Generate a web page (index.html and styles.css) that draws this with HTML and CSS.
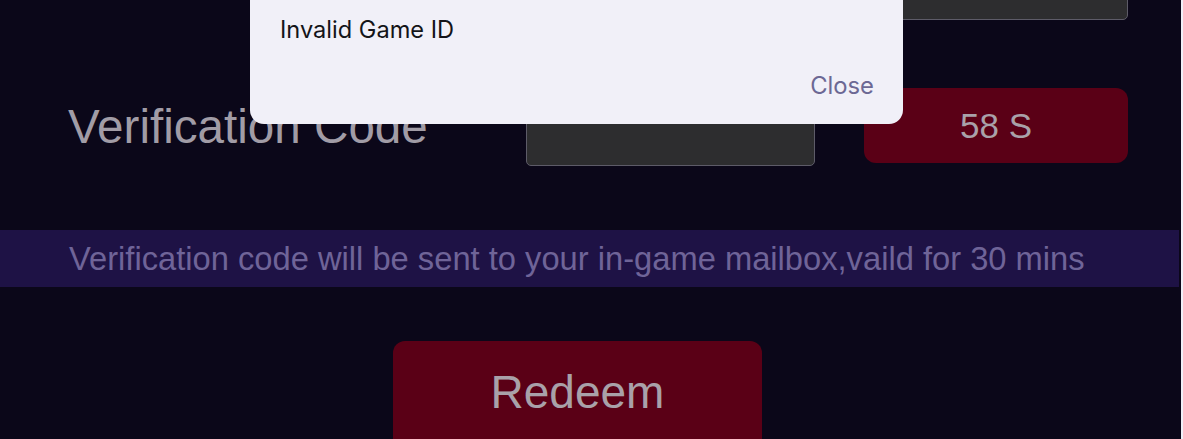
FILE: index.html
```html
<!DOCTYPE html>
<html lang="en">
<head>
<meta charset="utf-8">
<title>Redeem</title>
<link rel="stylesheet" href="styles.css">
</head>
<body>
<main class="page">
  <form class="form">
    <div class="row row-id">
      <label class="label"></label>
      <input class="input input-wide" type="text">
    </div>
    <div class="row">
      <label class="label">Verification Code</label>
      <input class="input" type="text">
      <button type="button" class="btn btn-timer">58 S</button>
    </div>
    <div class="notice">Verification code will be sent to your in-game mailbox,vaild for 30 mins</div>
    <div class="actions">
      <button type="button" class="btn btn-redeem">Redeem</button>
    </div>
  </form>
</main>
<div class="dialog">
  <div class="dialog-msg">Invalid Game ID</div>
  <div class="dialog-actions"><span class="dialog-close">Close</span></div>
</div>
</body>
</html>
```
FILE: styles.css
```css
html {
  background: #f0eff7;
}
body {
  margin: 0 2px 0 0;
  background: #0b0719;
  height: 439px;
  overflow: hidden;
  font-family: "Liberation Sans", Arial, sans-serif;
}
.page {
  margin-top: -58px;
}
.form {
  display: flex;
  flex-direction: column;
}
.row {
  display: grid;
  grid-template-columns: 409px 289px 264px;
  column-gap: 49px;
  padding-left: 68px;
  height: 78px;
  align-items: center;
  margin-bottom: 68px;
}
.row:nth-child(2) {
  margin-bottom: 64px;
}
.label {
  font-size: 47.6px;
  color: #a19ca6;
  line-height: 1;
  white-space: nowrap;
}
.input {
  box-sizing: border-box;
  height: 78px;
  background: #2d2d2f;
  border: 1px solid #5d5b68;
  border-radius: 5px;
  margin: 0;
  padding: 0;
}
.input-wide {
  grid-column: 2 / span 2;
  width: 602px;
}
.btn {
  border: none;
  margin: 0;
  padding: 0;
  background: #5a0016;
  color: #a9a1a9;
  font-family: "Liberation Sans", Arial, sans-serif;
  border-radius: 12px;
}
.btn-timer {
  height: 75px;
  font-size: 35px;
  align-self: start;
}
.notice {
  height: 57px;
  display: flex;
  align-items: center;
  padding-left: 69px;
  background: #1e1245;
  color: #6f6498;
  font-size: 32.7px;
  margin-right: 2px;
}
.actions {
  display: flex;
  padding-left: 393px;
  margin-top: 54px;
}
.btn-redeem {
  width: 369px;
  height: 110px;
  font-size: 46px;
  padding-bottom: 8px;
}
.dialog {
  position: absolute;
  left: 250px;
  top: -40px;
  width: 653px;
  height: 164px;
  box-sizing: border-box;
  background: #f1f0f8;
  border-radius: 14px;
  padding: 55px 29px 0 30px;
  font-family: Inter, "Noto Sans", sans-serif;
}
.dialog-msg {
  font-size: 23.6px;
  color: #141418;
  line-height: 30px;
}
.dialog-actions {
  display: flex;
  justify-content: flex-end;
  margin-top: 26px;
}
.dialog-close {
  font-size: 23.8px;
  color: #6c6894;
  line-height: 30px;
}
```
